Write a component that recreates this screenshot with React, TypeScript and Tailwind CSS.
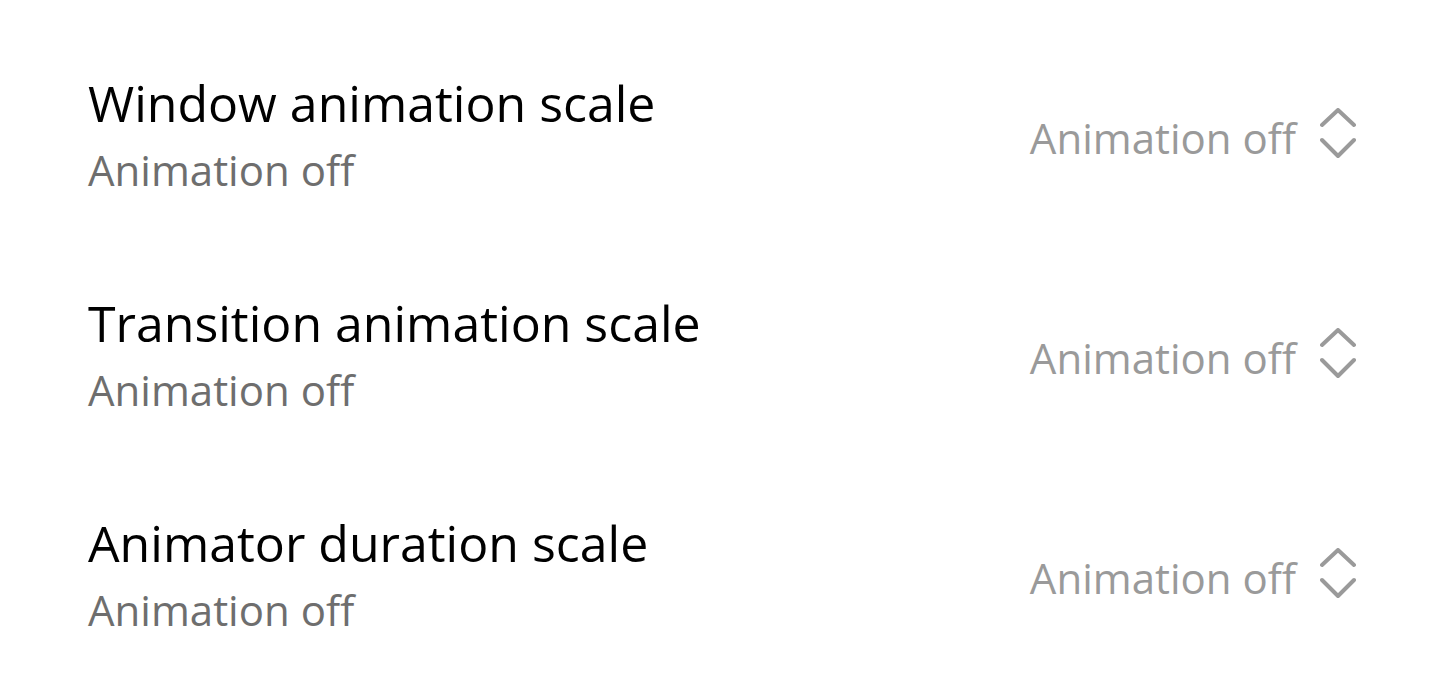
const rows = ['Window animation scale', 'Transition animation scale', 'Animator duration scale'];

function UpDown() {
    return (
        <svg width="36" height="52" viewBox="0 0 36 52" fill="none" className="mb-[6px] shrink-0">
            <path d="M2 17 L18 2 L34 17" stroke="#9a9a9a" strokeWidth="4" strokeLinecap="round" strokeLinejoin="round" />
            <path d="M2 32 L18 48 L34 32" stroke="#9a9a9a" strokeWidth="4" strokeLinecap="round" strokeLinejoin="round" />
        </svg>
    );
}

export default function App() {
    return (
        <div className="min-h-[698px] w-[1440px] bg-white pt-[27px] pl-[88px] pr-[84px]" style={{ fontFamily: '"Open Sans", "Noto Sans", sans-serif' }}>
            {rows.map((title) => (
                <div key={title} className="flex h-[220px] items-center justify-between">
                    <div className="flex flex-col">
                        <span className="text-[50px] leading-[65px] text-black">{title}</span>
                        <span className="text-[42px] leading-[67px] text-[#6e6e6e]">Animation off</span>
                    </div>
                    <div className="flex items-center gap-[24px]">
                        <span className="text-[42px] text-[#9a9a9a]">Animation off</span>
                        <UpDown />
                    </div>
                </div>
            ))}
        </div>
    );
}
